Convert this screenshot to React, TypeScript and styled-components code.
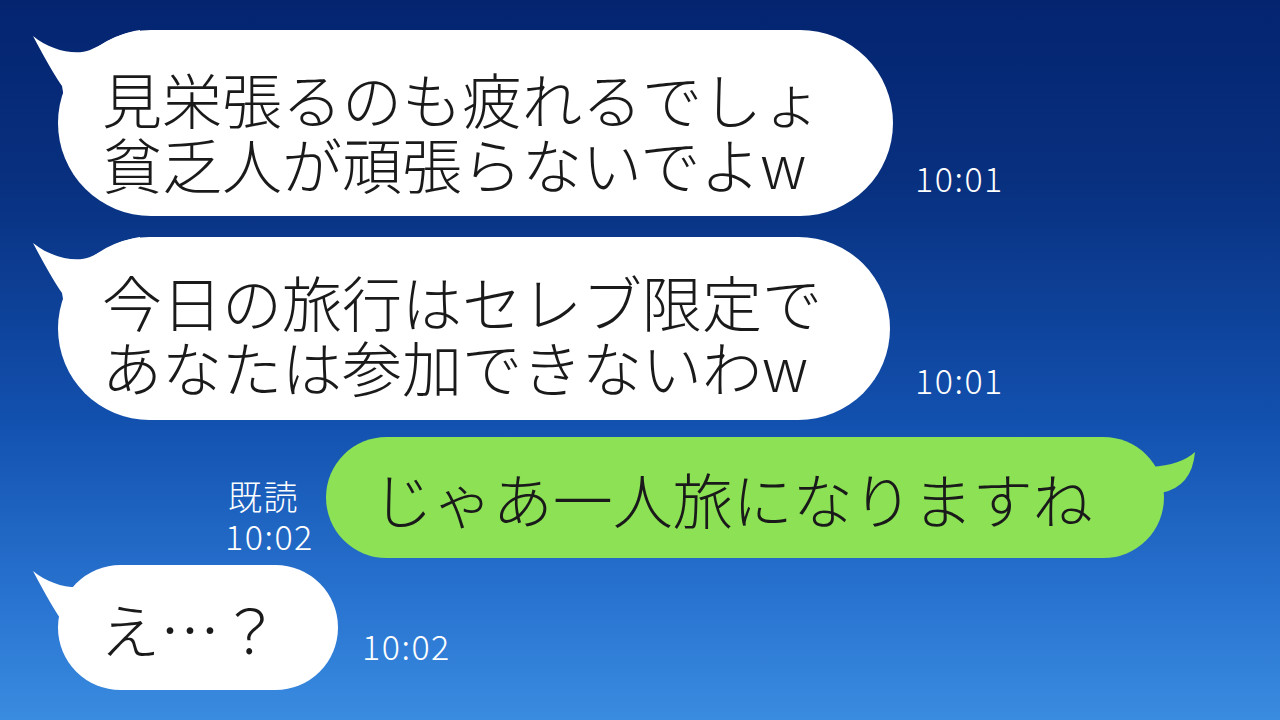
import React from 'react';
import styled, { createGlobalStyle } from 'styled-components';

const GlobalStyle = createGlobalStyle`
  html, body { margin: 0; padding: 0; }
  body { width: 1280px; height: 720px; overflow: hidden; }
`;

const FONT = `"Noto Sans CJK JP", "Noto Sans", sans-serif`;

const Screen = styled.div`
  width: 1280px;
  height: 720px;
  box-sizing: border-box;
  padding-top: 30px;
  display: flex;
  flex-direction: column;
  background: linear-gradient(to bottom, #042470 0%, #08307f 25%, #1250ae 58%, #2a76d2 85%, #3a8ce0 100%);
  font-family: ${FONT};
  overflow: hidden;
`;

const Row = styled.div<{ $gap: number; $left: number; $top: number; $metaBottom: number }>`
  display: flex;
  align-items: flex-end;
  gap: ${p => p.$gap}px;
  padding-left: ${p => p.$left}px;
  margin-top: ${p => p.$top}px;

  & > .meta {
    margin-bottom: ${p => p.$metaBottom}px;
  }
`;

const Bubble = styled.div<{ $mine?: boolean; $h: number; $pad: string }>`
  position: relative;
  box-sizing: border-box;
  height: ${p => p.$h}px;
  padding: ${p => p.$pad};
  border-radius: ${p => p.$h / 2}px;
  background: ${p => (p.$mine ? '#8ce155' : '#ffffff')};
  display: flex;
  flex-direction: column;
  justify-content: center;
`;

const Line = styled.div`
  position: relative;
  z-index: 1;
  font-size: 60px;
  line-height: 65px;
  font-weight: 300;
  color: #1a1a1a;
  white-space: nowrap;
`;

const Meta = styled.div`
  display: flex;
  flex-direction: column;
  color: #ffffff;
  font-family: ${FONT};
  font-weight: 300;
  font-size: 34px;
  letter-spacing: 1.5px;
  line-height: 40px;
`;

const TailLeft = styled.svg`
  position: absolute;
  left: -28px;
  top: 0;
  width: 110px;
  height: 80px;
`;

const TailRight = styled.svg`
  position: absolute;
  right: -36px;
  top: 10px;
  width: 60px;
  height: 50px;
`;

function Incoming({ lines, h, pad }: { lines: string[]; h: number; pad: string }) {
  return (
    <Bubble $h={h} $pad={pad}>
      <TailLeft viewBox="0 0 110 80">
        <path d="M3 6 C20 20 45 26 60 20 C75 14 85 4 110 0 L110 80 L36 80 L32 56 Q22 42 3 6 Z" fill="#ffffff" />
      </TailLeft>
      {lines.map(l => (
        <Line key={l}>{l}</Line>
      ))}
    </Bubble>
  );
}

export default function App() {
  return (
    <Screen>
      <GlobalStyle />
      <Row $gap={22} $left={58} $top={0} $metaBottom={18}>
        <Incoming h={186} pad="14px 71px 0 44px" lines={['見栄張るのも疲れるでしょ', '貧乏人が頑張らないでよw']} />
        <Meta className="meta">10:01</Meta>
      </Row>
      <Row $gap={25} $left={58} $top={21} $metaBottom={20}>
        <Incoming h={183} pad="8px 68px 0 44px" lines={['今日の旅行はセレブ限定で', 'あなたは参加できないわw']} />
        <Meta className="meta">10:01</Meta>
      </Row>
      <Row $gap={12} $left={225} $top={17} $metaBottom={2}>
        <Meta className="meta">
          <span style={{ paddingLeft: 3 }}>既読</span>
          <span>10:02</span>
        </Meta>
        <Bubble $mine $h={121} $pad="0 71px 0 47px">
          <TailRight viewBox="0 0 60 50">
            <path d="M55 5 Q41 18 11 20 L0 50 L21 50 L21 46 Q52 40 55 5 Z" fill="#8ce155" />
          </TailRight>
          <Line>じゃあ一人旅になりますね</Line>
        </Bubble>
      </Row>
      <Row $gap={24} $left={58} $top={7} $metaBottom={24}>
        <Incoming h={125} pad="0 58px 0 42px" lines={['え…？']} />
        <Meta className="meta">10:02</Meta>
      </Row>
    </Screen>
  );
}
